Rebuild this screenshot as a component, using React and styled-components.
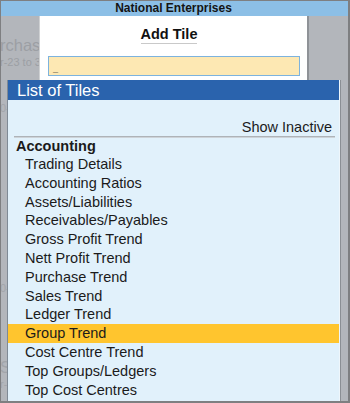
import React from 'react';
import styled, { createGlobalStyle } from 'styled-components';

const tiles = [
    'Trading Details',
    'Accounting Ratios',
    'Assets/Liabilities',
    'Receivables/Payables',
    'Gross Profit Trend',
    'Nett Profit Trend',
    'Purchase Trend',
    'Sales Trend',
    'Ledger Trend',
    'Group Trend',
    'Cost Centre Trend',
    'Top Groups/Ledgers',
    'Top Cost Centres',
];

const selected = 'Group Trend';

const App = () => {
    return (
        <Frame>
            <GlobalStyle />
            <TitleBar>National Enterprises</TitleBar>

            <DialogRow>
                <BackGutter>
                    <GhostTitle>rchase</GhostTitle>
                    <GhostPeriod>r-23 to 31-Mar-24</GhostPeriod>
                </BackGutter>
                <Dialog>
                    <Heading>Add Tile</Heading>
                    <Input>
                        <Caret>_</Caret>
                    </Input>
                </Dialog>
            </DialogRow>

            <ListRow>
                <SideGutter>
                    <GhostBit $top={22}>0-</GhostBit>
                    <GhostBit $top={168}>0-</GhostBit>
                    <GhostBit $top={66} $big>S</GhostBit>
                    <GhostBit $top={2}>r-</GhostBit>
                </SideGutter>
                <ListPanel>
                    <ListHeader>List of Tiles</ListHeader>
                    <ListBody>
                        <ShowInactive>Show Inactive</ShowInactive>
                        <Separator />
                        <GroupName>Accounting</GroupName>
                        {tiles.map((name) => (
                            <Item key={name} $active={name === selected}>
                                {name}
                            </Item>
                        ))}
                    </ListBody>
                </ListPanel>
            </ListRow>
        </Frame>
    );
};

export default App;

// Styled components
const GlobalStyle = createGlobalStyle`
    html, body {
        margin: 0;
        padding: 0;
        background: #b3b6bb;
    }
    * {
        box-sizing: border-box;
    }
    body {
        font-family: 'Liberation Sans', Arial, sans-serif;
        color: #1b1b1b;
    }
`;

const Frame = styled.div`
    width: 350px;
    height: 403px;
    display: flex;
    flex-direction: column;
    background: #b3b6bb;
    border-style: solid;
    border-color: #7e7f81;
    border-width: 1px 2px 2px 1px;
    overflow: hidden;
`;

const TitleBar = styled.div`
    height: 15px;
    flex: none;
    background: #8cbfe6;
    font-size: 12px;
    font-weight: bold;
    line-height: 15px;
    text-align: center;
    color: #141414;
    padding-right: 2px;
`;

const DialogRow = styled.div`
    display: flex;
    height: 64px;
    flex: none;
`;

const BackGutter = styled.div`
    width: 38px;
    flex: none;
    overflow: hidden;
    white-space: nowrap;
    color: #9c9fa4;
    padding-top: 19px;
`;

const GhostTitle = styled.div`
    font-size: 16.5px;
    line-height: 20px;
    margin-left: -1px;
`;

const GhostPeriod = styled.div`
    font-size: 11px;
    line-height: 13px;
    margin-top: 1px;
    margin-left: -1px;
`;

const Dialog = styled.div`
    width: 270px;
    flex: none;
    background: #ffffff;
    border-left: 1px solid #cfd1d3;
    border-right: 2px solid #8f9297;
    display: flex;
    flex-direction: column;
    align-items: center;
    padding-top: 10px;
`;

const Heading = styled.div`
    font-size: 14.5px;
    font-weight: bold;
    line-height: 17px;
    border-bottom: 1px solid #c9c9c9;
    margin-right: 9px;
    color: #111;
`;

const Input = styled.div`
    width: 252px;
    height: 20px;
    margin-top: 12px;
    margin-left: 1px;
    background: #fde8b3;
    border: 1px solid #7db3de;
    padding-left: 4px;
`;

const Caret = styled.span`
    display: block;
    font-size: 9px;
    font-weight: bold;
    line-height: 10px;
    margin-top: 7px;
    color: #222;
`;

const ListRow = styled.div`
    display: flex;
    flex: 1;
    min-height: 0;
`;

const SideGutter = styled.div`
    width: 6px;
    flex: none;
    overflow: hidden;
    white-space: nowrap;
    color: #a2a5aa;
    display: flex;
    flex-direction: column;
`;

const GhostBit = styled.div`
    font-size: ${(p) => (p.$big ? '16px' : '11px')};
    line-height: ${(p) => (p.$big ? '16px' : '12px')};
    margin-top: ${(p) => p.$top}px;
    margin-left: -1px;
`;

const ListPanel = styled.div`
    width: 333px;
    flex: none;
    display: flex;
    flex-direction: column;
    border-left: 1px solid #7f8a95;
    border-right: 1px solid #eef6fb;
    box-shadow: 1px 0 0 #8b8f94;
`;

const ListHeader = styled.div`
    height: 20px;
    flex: none;
    background: #2a63ad;
    color: #ffffff;
    font-size: 16.5px;
    line-height: 20px;
    padding-left: 9px;
`;

const ListBody = styled.div`
    flex: 1;
    background: #e1f1fb;
    padding-top: 18px;
    font-size: 14.5px;
`;

const ShowInactive = styled.div`
    line-height: 18px;
    text-align: right;
    padding-right: 7px;
`;

const Separator = styled.div`
    height: 1px;
    margin: 0 4px 0 6px;
    background: #aeb3b8;
    box-shadow: 0 1px 0 #cdd3d8;
`;

const GroupName = styled.div`
    font-weight: bold;
    line-height: 18px;
    padding-left: 8px;
`;

const Item = styled.div`
    height: 18.8px;
    line-height: 18.8px;
    padding-left: 17px;
    background: ${(p) => (p.$active ? '#ffc52e' : 'transparent')};
    white-space: nowrap;
`;
